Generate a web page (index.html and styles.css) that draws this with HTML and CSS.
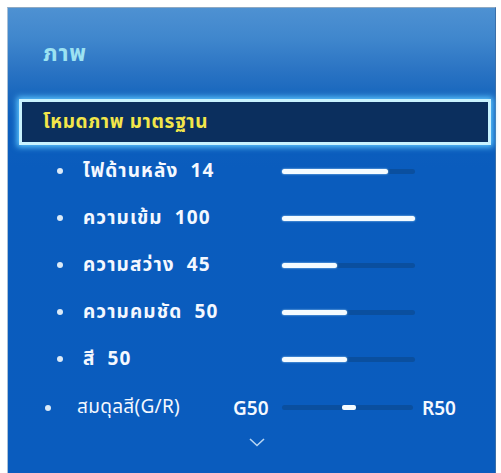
FILE: index.html
```html
<!DOCTYPE html>
<html lang="th">
<head>
<meta charset="utf-8">
<title>ภาพ</title>
<link rel="stylesheet" href="styles.css">
</head>
<body>
<div class="panel">
  <div class="header"><h1 class="title">ภาพ</h1></div>
  <div class="selected"><span class="sel-text">โหมดภาพ มาตรฐาน</span></div>
  <ul class="list">
    <li class="row"><span class="dot"></span><span class="label">ไฟด้านหลัง&nbsp;&nbsp;14</span><span class="track"><span class="fill" style="width:80%"></span></span></li>
    <li class="row"><span class="dot"></span><span class="label">ความเข้ม&nbsp;&nbsp;100</span><span class="track"><span class="fill" style="width:100%"></span></span></li>
    <li class="row"><span class="dot"></span><span class="label">ความสว่าง&nbsp;&nbsp;45</span><span class="track"><span class="fill" style="width:41%"></span></span></li>
    <li class="row"><span class="dot"></span><span class="label">ความคมชัด&nbsp;&nbsp;50</span><span class="track"><span class="fill" style="width:49%"></span></span></li>
    <li class="row"><span class="dot"></span><span class="label">สี&nbsp;&nbsp;50</span><span class="track"><span class="fill" style="width:49%"></span></span></li>
    <li class="row balance"><span class="dot"></span><span class="label">สมดุลสี(G/R)</span><span class="gval">G50</span><span class="track"><span class="knob"></span></span><span class="rval">R50</span></li>
  </ul>
  <div class="more">
    <svg width="16" height="9" viewBox="0 0 16 9"><path d="M1 1 L8 7.5 L15 1" fill="none" stroke="#b9d6f2" stroke-width="1.6"/></svg>
  </div>
</div>
</body>
</html>
```
FILE: styles.css
```css
html, body {
  margin: 0;
  padding: 0;
  background: #ffffff;
}
body {
  padding: 7px 5px 0 7px;
  font-family: "Noto Sans", "Noto Sans Thai", sans-serif;
}
.panel {
  height: 466px;
  box-sizing: border-box;
  border-top: 1px solid #8fa9c2;
  border-left: 1px solid #a9c0d6;
  border-right: 1px solid #3b6fa8;
  background: linear-gradient(to bottom, #4e91d2 0px, #4087cd 30px, #2c75c4 60px, #1a68be 85px, #0e5fbd 110px, #0a5cbd 160px, #0a5cbe 100%);
  display: flex;
  flex-direction: column;
}
.header {
  height: 91px;
  display: flex;
  align-items: center;
  padding-left: 35px;
  box-sizing: border-box;
  padding-bottom: 2px;
}
.title {
  margin: 0;
  font-size: 23px;
  font-weight: 700;
  color: #9ce2f2;
  line-height: 1;
  letter-spacing: 0.8px;
}
.selected {
  margin-left: 11px;
  width: 472px;
  height: 46px;
  box-sizing: border-box;
  border: 3px solid #c8f2ff;
  background: #0b2f5e;
  box-shadow: 0 0 6px 2px #5ec8ff;
  display: flex;
  align-items: center;
  padding-left: 21px;
}
.sel-text {
  color: #f2e64a;
  font-size: 19px;
  font-weight: 700;
  letter-spacing: 0.6px;
}
.list {
  list-style: none;
  margin: 0;
  padding: 0;
}
.row {
  height: 47px;
  display: flex;
  align-items: center;
  padding-left: 49px;
  color: #f4f8ff;
  padding-top: 5px;
  box-sizing: border-box;
}
.dot {
  width: 6px;
  height: 6px;
  border-radius: 50%;
  background: #dbeaf7;
  flex: none;
}
.label {
  margin-left: 20px;
  width: 199px;
  font-size: 19px;
  font-weight: 700;
  flex: none;
  white-space: nowrap;
  letter-spacing: 1.1px;
}
.track {
  width: 133px;
  height: 5px;
  border-radius: 3px;
  background: #0a4f9f;
  position: relative;
  flex: none;
}
.fill {
  display: block;
  height: 100%;
  border-radius: 3px;
  background: #f4fbff;
  box-shadow: 0 0 2px #bfe8ff;
}
.balance {
  height: 50px;
  padding-left: 37px;
}
.balance .label {
  margin-left: 26px;
  width: 156px;
  font-weight: 400;
  letter-spacing: 0.3px;
}
.gval, .rval {
  font-size: 19px;
  font-weight: 600;
}
.gval {
  width: 49px;
}
.balance .track {
  width: 131px;
}
.rval {
  margin-left: 9px;
}
.knob {
  position: absolute;
  left: 60px;
  top: 0;
  width: 14px;
  height: 5px;
  border-radius: 2px;
  background: #f4fbff;
}
.more {
  display: flex;
  justify-content: center;
  padding-top: 8px;
  padding-left: 10px;
}
```
